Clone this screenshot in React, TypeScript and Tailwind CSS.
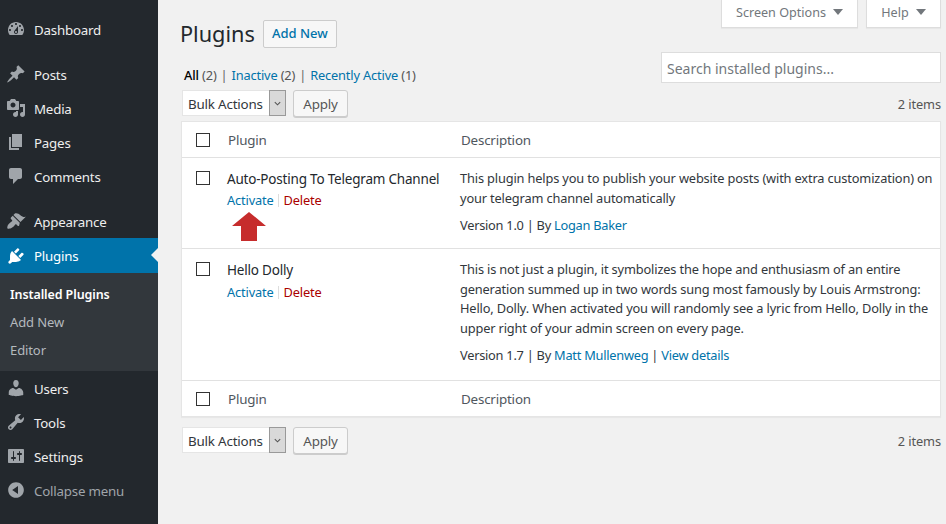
import React from "react";

const P: Record<string, string> = {
  dashboard: "M3.76 16h12.48c1.1-1.37 1.76-3.11 1.76-5 0-4.42-3.58-8-8-8s-8 3.58-8 8c0 1.89.66 3.63 1.76 5zM10 4c.55 0 1 .45 1 1s-.45 1-1 1-1-.45-1-1 .45-1 1-1zM6 6c.55 0 1 .45 1 1s-.45 1-1 1-1-.45-1-1 .45-1 1-1zm8 0c.55 0 1 .45 1 1s-.45 1-1 1-1-.45-1-1 .45-1 1-1zm-5.37 5.55L12 7v6c0 1.1-.9 2-2 2s-2-.9-2-2c0-.57.24-1.08.63-1.45zM4 10c.55 0 1 .45 1 1s-.45 1-1 1-1-.45-1-1 .45-1 1-1zm12 0c.55 0 1 .45 1 1s-.45 1-1 1-1-.45-1-1 .45-1 1-1zm-5 3c0-.55-.45-1-1-1s-1 .45-1 1 .45 1 1 1 1-.45 1-1z",
  posts: "M10.44 3.02l1.82-1.82 6.36 6.35-1.83 1.82c-1.05-.68-2.48-.57-3.41.36l-.75.75c-.92.93-1.04 2.35-.35 3.41l-1.83 1.82-2.41-2.41-2.8 2.79c-.42.42-3.38 2.71-3.8 2.29s1.86-3.39 2.28-3.81l2.79-2.79L4.1 9.36l1.83-1.82c1.05.69 2.48.57 3.4-.36l.75-.75c.93-.92 1.05-2.35.36-3.41z",
  media: "M13 11V4c0-.55-.45-1-1-1h-1.67L9 1H5L3.67 3H2c-.55 0-1 .45-1 1v7c0 .55.45 1 1 1h10c.55 0 1-.45 1-1zM7 4.5c1.38 0 2.5 1.12 2.5 2.5S8.38 9.5 7 9.5 4.5 8.38 4.5 7 5.62 4.5 7 4.5zM14 6h5v10.5c0 1.38-1.12 2.5-2.5 2.5S14 17.88 14 16.5s1.12-2.5 2.5-2.5c.17 0 .34.02.5.05V9h-3V6zm-4 8.05V13h2v3.5c0 1.38-1.12 2.5-2.5 2.5S7 17.88 7 16.5 8.12 14 9.5 14c.17 0 .34.02.5.05z",
  pages: "M6 15V2h10v13H6zm-1 1h8v2H3V5h2v11z",
  comments: "M5 2h9c1.1 0 2 .9 2 2v7c0 1.1-.9 2-2 2h-2l-5 5v-5H5c-1.1 0-2-.9-2-2V4c0-1.1.9-2 2-2z",
  appearance: "M14.48 11.06L7.41 3.99l1.5-1.5c.5-.56 2.3-.47 3.51.32 1.21.8 1.43 1.28 2.91 2.1 1.18.64 2.45 1.26 4.45.85zm-.71.71L6.7 4.7 4.93 6.47c-.39.39-.39 1.02 0 1.41l1.06 1.06c.39.39.39 1.03 0 1.42-.6.6-1.43 1.11-2.21 1.69-.35.26-.7.53-1.01.84C1.43 13.71.96 17.12 1.42 17.59c.36.36 2.81-.05 3.58-.37.76-.33 1.59-.86 2.31-1.5.58-.52 1.09-1.11 1.36-1.59.44-.79 1.36-1.05 1.96-.45l1.06 1.06c.39.39 1.02.39 1.41 0z",
  plugins: "M13.11 4.36L9.87 7.6 8 5.73l3.24-3.24c.35-.34 1.05-.2 1.56.32.52.51.66 1.21.31 1.55zm-8 1.77l.91-1.12 9.01 9.01-1.19.84c-.71.71-2.63 1.16-3.82 1.16H6.14L4.9 17.26c-.59.59-1.54.59-2.12 0-.59-.58-.59-1.53 0-2.12l1.24-1.24v-3.88c0-1.13.4-3.19 1.09-3.89zm7.26 3.97l3.24-3.24c.34-.35 1.04-.21 1.55.31.52.51.66 1.21.31 1.55l-3.24 3.25z",
  users: "M10 9.25c-2.27 0-2.73-3.44-2.73-3.44C7 4.02 7.82 2 9.97 2c2.16 0 2.98 2.02 2.71 3.81 0 0-.41 3.44-2.68 3.44zm0 2.57L12.72 10c2.39 0 4.52 2.33 4.52 4.53v2.49s-3.65 1.13-7.24 1.13c-3.65 0-7.24-1.13-7.24-1.13v-2.49c0-2.25 1.94-4.48 4.47-4.48z",
  tools: "M16.68 9.77c-1.34 1.34-3.3 1.67-4.95.99l-5.41 6.52c-.99.99-2.59.99-3.58 0s-.99-2.59 0-3.57l6.52-5.42c-.68-1.65-.35-3.61.99-4.95 1.28-1.28 3.12-1.62 4.72-1.06l-2.89 2.89 2.82 2.82 2.86-2.87c.53 1.58.18 3.39-1.08 4.65zM3.81 16.21c.4.39 1.04.39 1.43 0 .4-.4.4-1.04 0-1.43-.39-.4-1.03-.4-1.43 0-.39.39-.39 1.03 0 1.43z",
  settings: "M18 16V4c0-.55-.45-1-1-1H3c-.55 0-1 .45-1 1v12c0 .55.45 1 1 1h14c.55 0 1-.45 1-1zM8 11h1c.55 0 1 .45 1 1s-.45 1-1 1H8v1.5c0 .28-.22.5-.5.5s-.5-.22-.5-.5V13H6c-.55 0-1-.45-1-1s.45-1 1-1h1V5.5c0-.28.22-.5.5-.5s.5.22.5.5V11zm5-2h-1c-.55 0-1-.45-1-1s.45-1 1-1h1V5.5c0-.28.22-.5.5-.5s.5.22.5.5V7h1c.55 0 1 .45 1 1s-.45 1-1 1h-1v5.5c0 .28-.22.5-.5.5s-.5-.22-.5-.5V9z",
  collapse: "M10 2.16c4.33 0 7.84 3.51 7.84 7.84s-3.51 7.84-7.84 7.84S2.16 14.33 2.16 10 5.71 2.16 10 2.16zm2 11.72V6.12L6.18 9.97z",
};

function Item({ icon, label, active, dim, className = "h-[34px]" }: { icon: string; label: string; active?: boolean; dim?: boolean; className?: string }) {
  return (
    <div className={`relative flex items-center ${active ? "bg-[#0073aa] text-white" : dim ? "text-[#a0a5aa]" : "text-[#eee]"} ${className}`}>
      <svg viewBox="0 0 20 20" className={`ml-[6px] h-5 w-5 ${active ? "fill-white" : "fill-[#a0a5aa]"}`}>
        <path d={P[icon]} />
      </svg>
      <span className={`ml-2 text-[13.3px] tracking-[-0.2px] ${active ? "pt-[2px]" : "pt-[4px]"}`}>{label}</span>
      {active && <span className="absolute right-0 top-[10px] h-0 w-0 border-y-[7px] border-r-[7px] border-y-transparent border-r-[#f1f1f1]" />}
    </div>
  );
}

function Sidebar() {
  return (
    <aside className="flex h-[524px] w-[158px] shrink-0 flex-col bg-[#23282d] pt-[12px]">
      <Item icon="dashboard" label="Dashboard" />
      <Item icon="posts" label="Posts" className="mt-[11px] h-[34px]" />
      <Item icon="media" label="Media" />
      <Item icon="pages" label="Pages" />
      <Item icon="comments" label="Comments" />
      <Item icon="appearance" label="Appearance" className="mt-[11px] h-[34px]" />
      <Item icon="plugins" label="Plugins" active className="h-[35px]" />
      <div className="flex h-[98px] flex-col bg-[#32373c] pl-[10px] pt-[8px] text-[13px] tracking-[-0.1px]">
        <div className="flex h-[28px] items-center text-[12.5px] font-semibold text-white">Installed Plugins</div>
        <div className="flex h-[28px] items-center text-[#b4b9be]">Add New</div>
        <div className="flex h-[28px] items-center text-[#b4b9be]">Editor</div>
      </div>
      <Item icon="users" label="Users" />
      <Item icon="tools" label="Tools" />
      <Item icon="settings" label="Settings" />
      <Item icon="collapse" label="Collapse menu" dim />
    </aside>
  );
}

function Tab({ label, className }: { label: string; className: string }) {
  return (
    <div className={`flex h-[28px] items-center justify-center gap-[7px] border-x border-b border-[#ddd] bg-white text-[12.6px] text-[#72777c] shadow-[0_1px_1px_rgba(0,0,0,0.04)] ${className}`}>
      <span>{label}</span>
      <span className="mb-1 h-0 w-0 border-x-[5px] border-t-[6px] border-x-transparent border-t-[#72777c]" />
    </div>
  );
}

function Toolbar() {
  return (
    <div className="flex items-start">
      <div className="ml-px flex h-[26px] w-[104px] items-center border border-[#e5e5e5] bg-white pl-[5px] text-[13.4px] tracking-[-0.2px] text-[#32373c]">
        <span className="pt-[2px]">Bulk Actions</span>
        <span className="-mr-px ml-auto flex h-[26px] w-[17px] items-center justify-center border border-[#999] bg-[#d9d9d9]">
          <svg viewBox="0 0 10 10" className="h-[9px] w-[9px] fill-none stroke-[#555] stroke-[1.2]"><path d="M2 3.5l3 3 3-3" /></svg>
        </span>
      </div>
      <button className="ml-[7px] flex h-[27px] w-[55px] items-center justify-center rounded-[3px] border border-[#ccc] bg-[#f7f7f7] pt-[2px] text-[13.4px] tracking-[-0.2px] text-[#555] shadow-[0_1px_0_#ccc]">
        Apply
      </button>
      <span className="ml-auto pt-[5px] text-[12.8px] tracking-[-0.1px] text-[#555]">2 items</span>
    </div>
  );
}

function Check() {
  return <span className="block h-[14px] w-[14px] border border-[#333] bg-white" />;
}

function HeadRow({ className }: { className: string }) {
  return (
    <div className={`flex items-center text-[13.4px] tracking-[-0.2px] text-[#50575e] ${className}`}>
      <span className="w-[46px] pl-[14px]"><Check /></span>
      <span className="w-[233px] pt-[2px]">Plugin</span>
      <span className="pt-[2px]">Description</span>
    </div>
  );
}

const link = "text-[#0073aa]";

function Row({ name, children, version, arrow, actionsClass, className }: { name: string; children: React.ReactNode; version: React.ReactNode; arrow?: boolean; actionsClass: string; className: string }) {
  return (
    <div className={`flex border-b border-[#e1e1e1] ${className}`}>
      <div className="w-[45px] pl-[14px] pt-[13px]"><Check /></div>
      <div className="relative w-[233px] pt-[10px]">
        <div className="text-[13.5px] leading-[22px] tracking-[-0.2px] text-[#23282d]">{name}</div>
        <div className={`flex items-center text-[12.8px] leading-[22px] tracking-[-0.15px] ${actionsClass}`}>
          <span className={link}>Activate</span>
          <span className="mx-[4.5px] h-[13px] w-px bg-[#ddd]" />
          <span className="text-[#a00]">Delete</span>
        </div>
        {arrow && (
          <svg viewBox="0 0 34 29" className="absolute left-[5px] top-[54px] h-[29px] w-[34px] fill-[#c62c2c]">
            <path d="M17 0L34 14H25V29H9V14H0z" />
          </svg>
        )}
      </div>
      <div className="flex-1 pr-[5px] pt-[11px] text-[12.8px] leading-[19.5px] tracking-[-0.15px] text-[#32373c]">
        {children}
        <div className="mt-[8px] tracking-[-0.25px]">{version}</div>
      </div>
    </div>
  );
}

export default function App() {
  return (
    <div className="flex h-[524px] w-[946px] overflow-hidden bg-[#f1f1f1] font-['Noto_Sans','Open_Sans',sans-serif]">
      <Sidebar />
      <main className="flex flex-1 flex-col pl-[23px] pr-[5px]">
        <div className="flex h-[90px] justify-between">
          <div className="pt-[20px]">
            <div className="flex h-[28px] items-center">
              <h1 className="-ml-px text-[21.7px] text-[#23282d]">Plugins</h1>
              <button className="ml-[8px] flex h-[28px] w-[74px] items-center justify-center rounded-[2px] border border-[#ccc] bg-[#f7f7f7] text-[13px] font-medium text-[#0073aa]">Add New</button>
            </div>
            <div className="ml-[3px] mt-[16px] flex gap-[4px] text-[12.8px] leading-[22px] tracking-[-0.15px] text-[#555]">
              <span><span className="font-medium text-black">All</span> (2)</span>
              <span className="text-[#666]">|</span>
              <span><span className={link}>Inactive</span> (2)</span>
              <span className="text-[#666]">|</span>
              <span><span className={link}>Recently Active</span> (1)</span>
            </div>
          </div>
          <div className="flex w-[280px] flex-col">
            <div className="flex justify-end gap-[8px]">
              <Tab label="Screen Options" className="w-[137px]" />
              <Tab label="Help" className="w-[75px]" />
            </div>
            <div className="mt-[24px] flex h-[31px] items-center border border-[#ddd] bg-white pl-[5px] pt-[2px] text-[14px] text-[#72777c]">Search installed plugins...</div>
          </div>
        </div>
        <Toolbar />
        <div className="mt-[4px] border border-[#e5e5e5] bg-white shadow-[0_1px_1px_rgba(0,0,0,0.04)]">
          <HeadRow className="h-[36px] border-b border-[#e1e1e1]" />
          <Row name="Auto-Posting To Telegram Channel" arrow actionsClass="-mt-px" className="h-[91px]"
            version={<>Version 1.0 | By <span className={link}>Logan Baker</span></>}>
            This plugin helps you to publish your website posts (with extra customization) on your telegram channel automatically
          </Row>
          <Row name="Hello Dolly" actionsClass="mt-0" className="h-[132px]"
            version={<>Version 1.7 | By <span className={link}>Matt Mullenweg</span> | <span className={link}>View details</span></>}>
            This is not just a plugin, it symbolizes the hope and enthusiasm of an entire generation summed up in two words sung most famously by Louis Armstrong: Hello, Dolly. When activated you will randomly see a lyric from Hello, Dolly in the upper right of your admin screen on every page.
          </Row>
          <HeadRow className="h-[35px]" />
        </div>
        <div className="mt-[10px]"><Toolbar /></div>
      </main>
    </div>
  );
}
